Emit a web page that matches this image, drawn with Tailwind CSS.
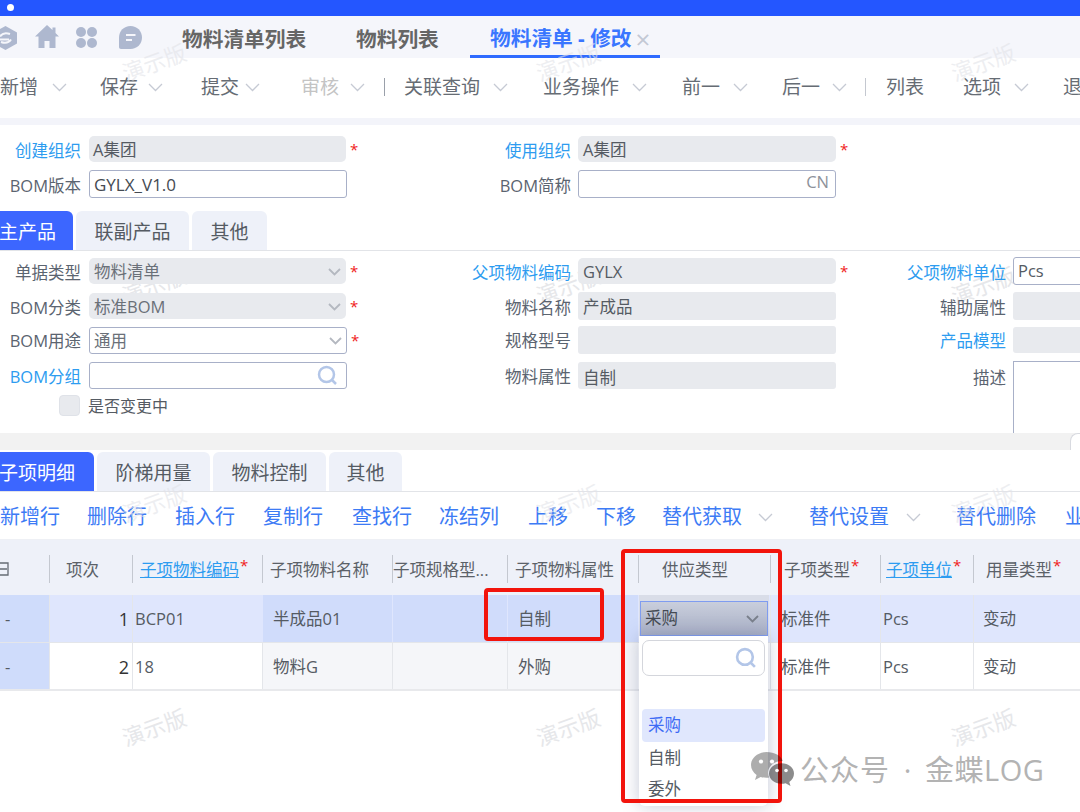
<!DOCTYPE html>
<html lang="zh">
<head>
<meta charset="utf-8">
<script src="https://cdn.jsdelivr.net/npm/@tailwindcss/browser@4"></script>
</head>
<body class="m-0 bg-white">
<div class="relative w-[1080px] h-[812px] overflow-hidden bg-white text-[#5b6470] font-['Open_Sans','Noto_Sans_CJK_SC',sans-serif]">

  <!-- top bar -->
  <div class="h-4 bg-[#2456ff] flex items-center pl-[7px] pb-[1px]"><div class="w-[7px] h-[7px] rounded-full bg-white"></div></div>

  <!-- nav -->
  <div class="h-[42px] bg-[#f5f6fb] flex items-start relative">
    <svg class="absolute left-[-7px] top-[9px]" width="25" height="26" viewBox="0 0 25 26"><path d="M12.500 1 24 7.500v11L12.500 25 1 18.500v-11z" fill="#aeb8cf"/><path d="M7 11.500c2-3 6-4 10-2.500M18 14.500c-2 3-6 4-10 2.500M7 14.500h9" fill="none" stroke="#f5f6fb" stroke-width="2"/></svg>
    <svg class="ml-[35px] mt-[9px] shrink-0" width="24" height="23" viewBox="0 0 24 23" fill="#aeb8cf"><path d="M12 0 0 11.500h3.500V23h6v-7h5v7h6V11.500H24l-3.500-3.500V2.500h-3V5z"/></svg>
    <svg class="ml-[16px] mt-[10px] shrink-0" width="23" height="23" viewBox="0 0 23 23" fill="#aeb8cf"><circle cx="6" cy="6" r="5"/><circle cx="17" cy="6" r="5"/><circle cx="6" cy="17" r="5"/><circle cx="17" cy="17" r="5"/></svg>
    <svg class="ml-[21px] mt-[10px] shrink-0" width="23" height="23" viewBox="0 0 23 23"><path d="M11.500 0C18 0 23 5 23 11.500S18 23 11.500 23H2c-1.200 0-2-.8-2-2v-9.500C0 5 5 0 11.500 0z" fill="#aeb8cf"/><path d="M7 9h9.500M7 14h6" stroke="#f5f6fb" stroke-width="2"/></svg>
    <div class="ml-[40px] shrink-0 w-[174px] h-[42px] flex items-center pt-[6px] text-[20.700px] font-bold text-[#666666] whitespace-nowrap">物料清单列表</div>
    <div class="shrink-0 w-[114px] h-[42px] flex items-center pt-[6px] text-[20.700px] font-bold text-[#666666] whitespace-nowrap">物料列表</div>
    <div class="shrink-0 w-[190px] h-[42px] flex items-center pt-[6px] pl-[20px] border-b-[3px] border-[#2f6bff] text-[20.700px] font-bold text-[#3a76ff] whitespace-nowrap">物料清单 - 修改<span class="ml-[4px] text-[26px] leading-none font-normal text-[#c3c8d4]">×</span></div>
  </div>

  <!-- toolbar -->
  <div class="h-[60px] bg-white flex items-center pb-[2px] text-[19px] text-[#666c74] whitespace-nowrap">
    <div class="shrink-0 w-[100px] flex items-center"><span class="w-[52px]">新增</span><svg width="15" height="9" viewBox="0 0 15 9" fill="none" stroke="#c6cad4" stroke-width="1.300"><path d="M1 1l6.500 6.500L14 1"/></svg></div>
    <div class="shrink-0 w-[101px] flex items-center"><span class="w-[48px]">保存</span><svg width="15" height="9" viewBox="0 0 15 9" fill="none" stroke="#c6cad4" stroke-width="1.300"><path d="M1 1l6.500 6.500L14 1"/></svg></div>
    <div class="shrink-0 w-[100px] flex items-center"><span class="w-[44px]">提交</span><svg width="15" height="9" viewBox="0 0 15 9" fill="none" stroke="#c6cad4" stroke-width="1.300"><path d="M1 1l6.500 6.500L14 1"/></svg></div>
    <div class="shrink-0 w-[83px] flex items-center text-[#c4c4c4]"><span class="w-[49px]">审核</span><svg width="15" height="9" viewBox="0 0 15 9" fill="none" stroke="#c6cad4" stroke-width="1.300"><path d="M1 1l6.500 6.500L14 1"/></svg></div>
    <div class="shrink-0 w-[20px] h-[18px] border-l border-[#9aa0aa]"></div>
    <div class="shrink-0 w-[139px] flex items-center"><span class="w-[89px]">关联查询</span><svg width="15" height="9" viewBox="0 0 15 9" fill="none" stroke="#c6cad4" stroke-width="1.300"><path d="M1 1l6.500 6.500L14 1"/></svg></div>
    <div class="shrink-0 w-[139px] flex items-center"><span class="w-[89px]">业务操作</span><svg width="15" height="9" viewBox="0 0 15 9" fill="none" stroke="#c6cad4" stroke-width="1.300"><path d="M1 1l6.500 6.500L14 1"/></svg></div>
    <div class="shrink-0 w-[100px] flex items-center"><span class="w-[51px]">前一</span><svg width="15" height="9" viewBox="0 0 15 9" fill="none" stroke="#c6cad4" stroke-width="1.300"><path d="M1 1l6.500 6.500L14 1"/></svg></div>
    <div class="shrink-0 w-[83px] flex items-center"><span class="w-[50px]">后一</span><svg width="15" height="9" viewBox="0 0 15 9" fill="none" stroke="#c6cad4" stroke-width="1.300"><path d="M1 1l6.500 6.500L14 1"/></svg></div>
    <div class="shrink-0 w-[21px] h-[18px] border-l border-[#c4c8d0]"></div>
    <div class="shrink-0 w-[77px]">列表</div>
    <div class="shrink-0 w-[100px] flex items-center"><span class="w-[51px]">选项</span><svg width="15" height="9" viewBox="0 0 15 9" fill="none" stroke="#c6cad4" stroke-width="1.300"><path d="M1 1l6.500 6.500L14 1"/></svg></div>
    <div class="shrink-0">退出</div>
  </div>
  <div class="h-[7px] bg-[#f3f4fa]"></div>

  <!-- header form -->
  <div class="h-[86px] pt-[11px] flex flex-col text-[16.500px] relative z-10">
    <div class="flex h-[26px] items-center">
      <div class="shrink-0 w-[490px] flex items-center">
        <div class="w-[81px] pt-[5px] flex justify-end whitespace-nowrap text-[#2d9cf0]">创建组织</div>
        <div class="ml-2 w-[257px] h-[26px] pt-[2px] rounded-[5px] bg-[#e8eaee] px-[4px] flex items-center text-[#555b63]">A集团</div>
        <span class="ml-[4px] text-[#f02020] text-[15px]">*</span>
      </div>
      <div class="shrink-0 flex items-center">
        <div class="w-[81px] pt-[5px] flex justify-end whitespace-nowrap text-[#2d9cf0]">使用组织</div>
        <div class="ml-[7px] w-[258px] h-[26px] pt-[2px] rounded-[5px] bg-[#e8eaee] px-[5px] flex items-center text-[#555b63]">A集团</div>
        <span class="ml-[4px] text-[#f02020] text-[15px]">*</span>
      </div>
    </div>
    <div class="flex h-[28px] mt-[8px] items-center">
      <div class="shrink-0 w-[490px] flex items-center">
        <div class="w-[81px] pt-[4px] flex justify-end whitespace-nowrap">BOM版本</div>
        <div class="ml-2 w-[258px] h-[28px] pt-[2px] rounded-[3px] border border-[#a8b0c8] bg-white px-[4px] flex items-center text-[17px] text-[#444a52]">GYLX_V1.0</div>
      </div>
      <div class="shrink-0 flex items-center">
        <div class="w-[81px] pt-[4px] flex justify-end whitespace-nowrap">BOM简称</div>
        <div class="ml-[7px] w-[258px] h-[28px] rounded-[3px] border border-[#a8b0c8] bg-white px-[6px] pb-[3px] flex items-center justify-end text-[#8d929a]">CN</div>
      </div>
    </div>
  </div>

  <!-- main tabs -->
  <div class="h-[40px] flex items-end gap-[3px] border-b border-[#e2e4e8] text-[19px] whitespace-nowrap">
    <div class="shrink-0 w-[73px] h-[39px] pt-[3px] rounded-tr-[6px] bg-[#3c66ff] text-white flex items-center justify-end pr-[17px]">主产品</div>
    <div class="shrink-0 w-[113px] h-[39px] pt-[3px] rounded-t-[6px] bg-[#eef1f9] text-[#555b63] flex items-center justify-center">联副产品</div>
    <div class="shrink-0 w-[75px] h-[39px] pt-[3px] rounded-t-[6px] bg-[#eef1f9] text-[#555b63] flex items-center justify-center">其他</div>
  </div>

  <!-- main form -->
  <div class="h-[182px] pt-[7px] flex flex-col text-[16.500px] relative z-10">
    <div class="flex h-[26px] items-center">
      <div class="shrink-0 w-[490px] flex items-center">
        <div class="w-[81px] pt-[5px] flex justify-end whitespace-nowrap">单据类型</div>
        <div class="ml-2 w-[257px] h-[26px] pt-[2px] rounded-[5px] bg-[#e8eaee] px-[5px] flex items-center justify-between text-[#6a7078]">物料清单<svg width="13" height="8" viewBox="0 0 13 8" fill="none" stroke="#b4b8c0" stroke-width="1.800"><path d="M1 1l5.500 5.500L12 1"/></svg></div>
        <span class="ml-[4px] text-[#f02020] text-[15px]">*</span>
      </div>
      <div class="shrink-0 w-[435px] flex items-center">
        <div class="w-[81px] pt-[5px] flex justify-end whitespace-nowrap text-[#2d9cf0]">父项物料编码</div>
        <div class="ml-[7px] w-[258px] h-[26px] pt-[2px] rounded-[5px] bg-[#e8eaee] px-[5px] flex items-center text-[#555b63]">GYLX</div>
        <span class="ml-[4px] text-[#f02020] text-[15px]">*</span>
      </div>
      <div class="shrink-0 flex items-center">
        <div class="w-[81px] pt-[5px] flex justify-end whitespace-nowrap text-[#2d9cf0]">父项物料单位</div>
        <div class="ml-[7px] w-[90px] h-[28px] shrink-0 rounded-l-[3px] border border-[#a8b0c8] bg-white px-[4px] flex items-center text-[#555b63]">Pcs</div>
      </div>
    </div>
    <div class="flex h-[28px] mt-[8px] items-center">
      <div class="shrink-0 w-[490px] flex items-center">
        <div class="w-[81px] pt-[4px] flex justify-end whitespace-nowrap">BOM分类</div>
        <div class="ml-2 w-[257px] h-[26px] pt-[2px] rounded-[5px] bg-[#e8eaee] px-[5px] flex items-center justify-between text-[#6a7078]">标准BOM<svg width="13" height="8" viewBox="0 0 13 8" fill="none" stroke="#b4b8c0" stroke-width="1.800"><path d="M1 1l5.500 5.500L12 1"/></svg></div>
        <span class="ml-[4px] text-[#f02020] text-[15px]">*</span>
      </div>
      <div class="shrink-0 w-[435px] flex items-center">
        <div class="w-[81px] pt-[4px] flex justify-end whitespace-nowrap">物料名称</div>
        <div class="ml-[7px] w-[258px] h-[28px] pt-[2px] rounded-[3px] bg-[#e8eaee] px-[5px] flex items-center text-[#555b63]">产成品</div>
      </div>
      <div class="shrink-0 flex items-center">
        <div class="w-[81px] pt-[4px] flex justify-end whitespace-nowrap">辅助属性</div>
        <div class="ml-[7px] w-[90px] h-[28px] shrink-0 rounded-l-[3px] bg-[#e8eaee]"></div>
      </div>
    </div>
    <div class="flex h-[28px] mt-[6px] items-center">
      <div class="shrink-0 w-[490px] flex items-center">
        <div class="w-[81px] pt-[3px] flex justify-end whitespace-nowrap">BOM用途</div>
        <div class="ml-2 w-[258px] h-[27px] pt-[2px] rounded-[3px] border border-[#a8b0c8] bg-white px-[4px] flex items-center justify-between text-[#6a7078]">通用<svg width="13" height="8" viewBox="0 0 13 8" fill="none" stroke="#b4b8c0" stroke-width="1.800"><path d="M1 1l5.500 5.500L12 1"/></svg></div>
        <span class="ml-[4px] text-[#f02020] text-[15px]">*</span>
      </div>
      <div class="shrink-0 w-[435px] flex items-center">
        <div class="w-[81px] pt-[3px] flex justify-end whitespace-nowrap">规格型号</div>
        <div class="ml-[7px] w-[258px] h-[28px] rounded-[3px] bg-[#e8eaee]"></div>
      </div>
      <div class="shrink-0 flex items-center">
        <div class="w-[81px] pt-[3px] flex justify-end whitespace-nowrap text-[#2d9cf0]">产品模型</div>
        <div class="ml-[7px] w-[90px] h-[26px] shrink-0 rounded-l-[3px] bg-[#e8eaee]"></div>
      </div>
    </div>
    <div class="flex h-[27px] mt-[7px] items-start">
      <div class="shrink-0 w-[490px] flex items-center">
        <div class="w-[81px] pt-[4px] flex justify-end whitespace-nowrap text-[#2d9cf0]">BOM分组</div>
        <div class="ml-2 w-[258px] h-[27px] rounded-[3px] border border-[#a8b0c8] bg-white pr-[8px] flex items-center justify-end"><svg width="21" height="21" viewBox="0 0 21 21" fill="none" stroke="#b3c6e8" stroke-width="2.500"><circle cx="9.500" cy="9.500" r="7.500"/><path d="M15 15l4 4"/></svg></div>
      </div>
      <div class="shrink-0 w-[435px] flex items-center">
        <div class="w-[81px] pt-[4px] flex justify-end whitespace-nowrap">物料属性</div>
        <div class="ml-[7px] w-[258px] h-[27px] pt-[5px] rounded-[3px] bg-[#e8eaee] px-[5px] flex items-center text-[#555b63]">自制</div>
      </div>
      <div class="shrink-0 flex items-start">
        <div class="w-[81px] pt-[5px] flex justify-end whitespace-nowrap">描述</div>
        <div class="ml-[7px] w-[90px] h-[72px] shrink-0 border-l border-t border-[#a8b0c8] bg-white"></div>
      </div>
    </div>
    <div class="flex items-center mt-[6px] ml-[59px] h-[22px]">
      <div class="w-[21px] h-[21px] rounded-[4px] bg-[#e8eaee] border border-[#dfe2e8]"></div>
      <span class="ml-[8px] pt-[2px] text-[16px] text-[#555b63]">是否变更中</span>
    </div>
  </div>
  <div class="h-[17px] bg-[#f2f2f2] relative z-20"><div class="absolute right-0 top-0 w-[10px] h-[17px] rounded-tl-[8px] border-l border-t border-[#d8dae0] bg-white"></div></div>

  <!-- sub tabs -->
  <div class="h-[42px] pt-[3px] flex items-end gap-[3px] border-b border-[#e2e4e8] text-[19px] whitespace-nowrap">
    <div class="shrink-0 w-[94px] h-[39px] pt-[3px] rounded-tr-[6px] bg-[#3c66ff] text-white flex items-center justify-end pr-[19px]">子项明细</div>
    <div class="shrink-0 w-[113px] h-[39px] pt-[3px] rounded-t-[6px] bg-[#eef1f9] text-[#555b63] flex items-center justify-center">阶梯用量</div>
    <div class="shrink-0 w-[113px] h-[39px] pt-[3px] rounded-t-[6px] bg-[#eef1f9] text-[#555b63] flex items-center justify-center">物料控制</div>
    <div class="shrink-0 w-[73px] h-[39px] pt-[3px] rounded-t-[6px] bg-[#eef1f9] text-[#555b63] flex items-center justify-center">其他</div>
  </div>

  <!-- actions -->
  <div class="h-[48px] flex items-center pt-[3px] text-[20px] text-[#3d7bf5] border-b border-[#eef0f5] whitespace-nowrap">
    <span class="shrink-0 w-[87px]">新增行</span>
    <span class="shrink-0 w-[88px]">删除行</span>
    <span class="shrink-0 w-[88px]">插入行</span>
    <span class="shrink-0 w-[89px]">复制行</span>
    <span class="shrink-0 w-[87px]">查找行</span>
    <span class="shrink-0 w-[89px]">冻结列</span>
    <span class="shrink-0 w-[68px]">上移</span>
    <span class="shrink-0 w-[66px]">下移</span>
    <span class="shrink-0 w-[96px]">替代获取</span>
    <svg class="shrink-0" width="51" height="9" viewBox="0 0 51 9" fill="none" stroke="#c6cad4" stroke-width="1.300"><path d="M1 1l6.500 6.500L14 1"/></svg>
    <span class="shrink-0 w-[97px]">替代设置</span>
    <svg class="shrink-0" width="50" height="9" viewBox="0 0 50 9" fill="none" stroke="#c6cad4" stroke-width="1.300"><path d="M1 1l6.500 6.500L14 1"/></svg>
    <span class="shrink-0 w-[109px]">替代删除</span>
    <span class="shrink-0">业务操作</span>
  </div>

  <!-- table header -->
  <div class="h-[55px] pt-[15px] bg-[#eef1f9] grid grid-cols-[49px_83px_130px_130px_115px_131px_132px_110px_93px_107px] text-[16.500px] text-[#5b6168] whitespace-nowrap">
    <div class="h-[28px] flex items-center"><svg width="9" height="14" viewBox="0 0 9 14" fill="none" stroke="#666c74" stroke-width="1.300"><path d="M0 1h8v12H0M0 7h7"/></svg></div>
    <div class="h-[28px] pt-[2px] border-l border-[#c4c8d0] flex items-center pl-[16px]">项次</div>
    <div class="h-[28px] pt-[2px] border-l border-[#c4c8d0] flex items-center pl-[7px]"><span class="text-[#2d9cf0] underline">子项物料编码</span><span class="text-[#f02020] text-[15px] mb-[10px] ml-[1px]">*</span></div>
    <div class="h-[28px] pt-[2px] border-l border-[#c4c8d0] flex items-center pl-[7px]">子项物料名称</div>
    <div class="h-[28px] pt-[2px] border-l border-[#c4c8d0] flex items-center">子项规格型...</div>
    <div class="h-[28px] pt-[2px] border-l border-[#c4c8d0] flex items-center pl-[7px]">子项物料属性</div>
    <div class="h-[28px] pt-[2px] border-l border-[#c4c8d0] flex items-center pl-[23px]">供应类型</div>
    <div class="h-[28px] pt-[2px] border-l border-[#c4c8d0] flex items-center pl-[13px]">子项类型<span class="text-[#f02020] text-[15px] mb-[10px] ml-[1px]">*</span></div>
    <div class="h-[28px] pt-[2px] border-l border-[#c4c8d0] flex items-center pl-[5px]"><span class="text-[#2d9cf0] underline">子项单位</span><span class="text-[#f02020] text-[15px] mb-[10px] ml-[1px]">*</span></div>
    <div class="h-[28px] pt-[2px] border-l border-[#c4c8d0] flex items-center pl-[12px]">用量类型<span class="text-[#f02020] text-[15px] mb-[10px] ml-[1px]">*</span></div>
  </div>

  <!-- table rows -->
  <div class="h-[48px] grid grid-cols-[49px_83px_130px_130px_115px_131px_132px_110px_93px_107px] border-b border-[#e4e6ea] text-[16.500px] text-[#555b63] whitespace-nowrap">
    <div class="bg-[#cfdcfb] pt-[2px] flex items-center pl-[5px]">-</div>
    <div class="bg-[#dfe6fd] pt-[2px] border-l border-[#e4e6ea] flex items-center justify-end pr-[3px] text-[18px] text-[#333333]">1</div>
    <div class="bg-[#dfe6fd] pt-[2px] border-l border-[#e4e6ea] flex items-center pl-[2px]">BCP01</div>
    <div class="bg-[#d0dcfb] pt-[2px] border-l border-[#dfe6fd] flex items-center pl-[10px]">半成品01</div>
    <div class="bg-[#d0dcfb] border-l border-[#dfe6fd]"></div>
    <div class="bg-[#d0dcfb] pt-[2px] border-l border-[#dfe6fd] flex items-center pl-[10px]">自制</div>
    <div class="bg-[#dfe6fd]"></div>
    <div class="bg-[#dfe6fd] pt-[2px] border-l border-[#e4e6ea] flex items-center pl-[10px]">标准件</div>
    <div class="bg-[#dfe6fd] pt-[2px] border-l border-[#e4e6ea] flex items-center pl-[2px]">Pcs</div>
    <div class="bg-[#dfe6fd] pt-[2px] border-l border-[#e4e6ea] flex items-center pl-[9px]">变动</div>
  </div>
  <div class="h-[48px] grid grid-cols-[49px_83px_130px_130px_115px_131px_132px_110px_93px_107px] border-b-2 border-[#e8e9ec] text-[16.500px] text-[#555b63] whitespace-nowrap">
    <div class="bg-[#cfdcfb] pt-[2px] flex items-center pl-[5px]">-</div>
    <div class="bg-white pt-[2px] border-l border-[#e4e6ea] flex items-center justify-end pr-[3px] text-[18px] text-[#333333]">2</div>
    <div class="bg-white pt-[2px] border-l border-[#e4e6ea] flex items-center pl-[2px]">18</div>
    <div class="bg-[#f5f6f9] pt-[2px] border-l border-[#e4e6ea] flex items-center pl-[10px]">物料G</div>
    <div class="bg-[#f5f6f9] border-l border-[#e4e6ea]"></div>
    <div class="bg-[#f5f6f9] pt-[2px] border-l border-[#e4e6ea] flex items-center pl-[10px]">外购</div>
    <div class="bg-white"></div>
    <div class="bg-white pt-[2px] border-l border-[#e4e6ea] flex items-center pl-[10px]">标准件</div>
    <div class="bg-white pt-[2px] border-l border-[#e4e6ea] flex items-center pl-[2px]">Pcs</div>
    <div class="bg-white pt-[2px] border-l border-[#e4e6ea] flex items-center pl-[9px]">变动</div>
  </div>

  <!-- watermarks -->
  <span class="absolute left-[121px] top-[51px] -rotate-[20deg] text-[22px] leading-none text-[#e2e3e8]/60 whitespace-nowrap">演示版</span>
  <span class="absolute left-[535px] top-[51px] -rotate-[20deg] text-[22px] leading-none text-[#e2e3e8]/60 whitespace-nowrap">演示版</span>
  <span class="absolute left-[950px] top-[51px] -rotate-[20deg] text-[22px] leading-none text-[#e2e3e8]/60 whitespace-nowrap">演示版</span>
  <span class="absolute left-[121px] top-[274px] -rotate-[20deg] text-[22px] leading-none text-[#e6e7ea] whitespace-nowrap">演示版</span>
  <span class="absolute left-[535px] top-[274px] -rotate-[20deg] text-[22px] leading-none text-[#e6e7ea] whitespace-nowrap">演示版</span>
  <span class="absolute left-[950px] top-[274px] -rotate-[20deg] text-[22px] leading-none text-[#e6e7ea] whitespace-nowrap">演示版</span>
  <span class="absolute left-[121px] top-[492px] -rotate-[20deg] text-[22px] leading-none text-[#e2e3e8]/60 whitespace-nowrap">演示版</span>
  <span class="absolute left-[535px] top-[492px] -rotate-[20deg] text-[22px] leading-none text-[#e2e3e8]/60 whitespace-nowrap">演示版</span>
  <span class="absolute left-[950px] top-[492px] -rotate-[20deg] text-[22px] leading-none text-[#e2e3e8]/60 whitespace-nowrap">演示版</span>
  <span class="absolute left-[121px] top-[716px] -rotate-[20deg] text-[22px] leading-none text-[#e6e7ea] whitespace-nowrap">演示版</span>
  <span class="absolute left-[535px] top-[716px] -rotate-[20deg] text-[22px] leading-none text-[#e6e7ea] whitespace-nowrap">演示版</span>
  <span class="absolute left-[950px] top-[716px] -rotate-[20deg] text-[22px] leading-none text-[#e6e7ea] whitespace-nowrap">演示版</span>

  <!-- dropdown -->
  <div class="absolute left-[639px] top-[595px] w-[130px] h-[211px] text-[16.500px] text-[#555b63] z-30">
    <div class="absolute left-0 top-0 w-[130px] h-[42px] bg-[#d9dde8]"></div>
    <div class="absolute left-[1px] top-[6px] w-[128px] h-[35px] border border-[#7f9cf0] bg-gradient-to-b from-[#c9cedc] to-[#a9b0c6] px-[4px] flex items-center justify-between text-[#444a52]">采购<svg class="mr-[4px]" width="13" height="8" viewBox="0 0 13 8" fill="none" stroke="#7a808c" stroke-width="1.800"><path d="M1 1l5.500 5.500L12 1"/></svg></div>
    <div class="absolute left-0 top-[41px] w-[129px] h-[170px] rounded-b-[6px] bg-white shadow-[0_0_18px_rgba(90,100,140,0.35)] flex flex-col px-[3px] pt-[4px]">
      <div class="h-[36px] shrink-0 rounded-[7px] border border-[#d4d6dc] bg-white pr-[7px] flex items-center justify-end"><svg width="22" height="22" viewBox="0 0 21 21" fill="none" stroke="#b3c6e8" stroke-width="2.500"><circle cx="9.500" cy="9.500" r="7.500"/><path d="M15 15l4 4"/></svg></div>
      <div class="mt-[33px] h-[33px] shrink-0 rounded-[4px] bg-[#e0e7fd] text-[#3d6bf5] pl-[6px] flex items-center">采购</div>
      <div class="h-[32px] shrink-0 pl-[6px] flex items-center">自制</div>
      <div class="h-[30px] shrink-0 pl-[6px] flex items-center">委外</div>
    </div>
  </div>

  <!-- red highlight frames -->
  <div class="absolute left-[484px] top-[588px] w-[120px] h-[53px] border-[4px] border-[#f2140c] rounded-[4px] z-40"></div>
  <div class="absolute left-[621px] top-[549px] w-[161px] h-[254px] border-[4px] border-[#f2140c] rounded-[4px] z-40"></div>

  <!-- footer mark -->
  <div class="absolute left-[751px] top-[752px] flex items-center z-50">
    <svg class="shrink-0" width="43" height="34" viewBox="0 0 43 34"><path d="M15.500 0C7 0 0 5.700 0 13c0 4 2.200 7.500 5.600 9.900L4 28l5.700-3c1.800.5 3.800.8 5.800.8 1 0 1.800-.1 2.600-.2C17.500 24 17 22.500 17 21c0-6.500 6-12 14-12 .3 0 .5 0 .8 0C30.300 3.800 23.500 0 15.500 0z" fill="#000" fill-opacity="0.320"/><path d="M43 21.500c0-5.700-5.500-10.300-12.500-10.300S18 15.800 18 21.500s5.500 10.300 12.500 10.300c1.400 0 2.800-.2 4.100-.6L39.500 34l-1.200-4.100c3-2 4.700-5 4.700-8.400z" fill="#000" fill-opacity="0.450"/><circle cx="10" cy="9.500" r="2.100" fill="#fff"/><circle cx="21" cy="9.500" r="2.100" fill="#fff"/><circle cx="26" cy="18.500" r="1.800" fill="#fff"/><circle cx="35" cy="18.500" r="1.800" fill="#fff"/></svg>
    <span class="shrink-0 ml-[6px] text-[29px] leading-none tracking-[1px] text-[#b3b3b3] whitespace-nowrap">公众号</span>
    <span class="shrink-0 w-[35px] text-center text-[29px] leading-none text-[#b3b3b3]">·</span>
    <span class="shrink-0 text-[29px] leading-none tracking-[0.500px] text-[#b3b3b3] whitespace-nowrap">金蝶LOG</span>
  </div>
</div>
</body>
</html>
